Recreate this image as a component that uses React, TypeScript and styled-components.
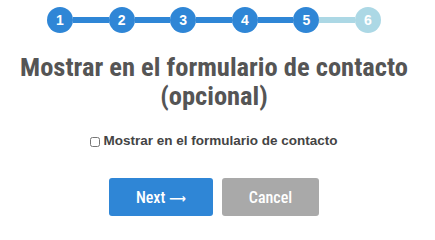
import React from "react";
import styled, { createGlobalStyle } from "styled-components";

const GlobalStyle = createGlobalStyle`
  html, body {
    margin: 0;
    padding: 0;
    background: #fff;
  }
  body {
    font-family: "Liberation Sans", Arial, sans-serif;
  }
`;

const steps = [1, 2, 3, 4, 5, 6];
const current = 5;

const Page = styled.div`
  width: 428px;
  height: 229px;
  display: flex;
  flex-direction: column;
  align-items: center;
`;

const Stepper = styled.div`
  display: flex;
  align-items: center;
  margin-top: 7px;
`;

const Dot = styled.div<{ $done: boolean }>`
  width: 26px;
  height: 26px;
  border-radius: 50%;
  background: ${(p) => (p.$done ? "#2f86d6" : "#acd8e5")};
  color: #fff;
  font: bold 14px "Liberation Sans", Arial, sans-serif;
  display: flex;
  align-items: center;
  justify-content: center;
`;

const Line = styled.div<{ $done: boolean }>`
  width: 35.6px;
  height: 6px;
  background: ${(p) => (p.$done ? "#2f86d6" : "#acd8e5")};
`;

const Title = styled.h1`
  margin: 19px 0 0;
  width: 410px;
  text-align: center;
  font-family: "Roboto Condensed", "Roboto", sans-serif;
  font-stretch: condensed;
  font-weight: 700;
  font-size: 26.5px;
  line-height: 29px;
  color: #555;
`;

const Option = styled.label`
  display: flex;
  align-items: center;
  margin-top: 23px;
  font: bold 13.5px "Liberation Sans", Arial, sans-serif;
  color: #444;
`;

const Box = styled.input`
  width: 10px;
  height: 10px;
  margin: 2px 3px 0 0;
`;

const Actions = styled.div`
  display: flex;
  gap: 9px;
  margin-top: 30px;
`;

const Button = styled.button<{ $primary?: boolean }>`
  width: ${(p) => (p.$primary ? "104px" : "97px")};
  height: 38px;
  border: none;
  border-radius: 3px;
  background: ${(p) => (p.$primary ? "#2f86d6" : "#a9a9a9")};
  color: #fff;
  font-family: "Roboto Condensed", "Roboto", sans-serif;
  font-stretch: condensed;
  font-size: 16px;
  font-weight: 500;
  cursor: pointer;
`;

const Arrow = styled.span`
  font-family: "DejaVu Sans", sans-serif;
  font-weight: bold;
  font-size: 13px;
  margin-left: 4px;
`;

export default function App() {
  return (
    <Page>
      <GlobalStyle />
      <Stepper>
        {steps.map((n, i) => (
          <React.Fragment key={n}>
            {i > 0 && <Line $done={n <= current} />}
            <Dot $done={n <= current}>{n}</Dot>
          </React.Fragment>
        ))}
      </Stepper>
      <Title>Mostrar en el formulario de contacto (opcional)</Title>
      <Option>
        <Box type="checkbox" />
        Mostrar en el formulario de contacto
      </Option>
      <Actions>
        <Button $primary>
          Next<Arrow>⟶</Arrow>
        </Button>
        <Button>Cancel</Button>
      </Actions>
    </Page>
  );
}
